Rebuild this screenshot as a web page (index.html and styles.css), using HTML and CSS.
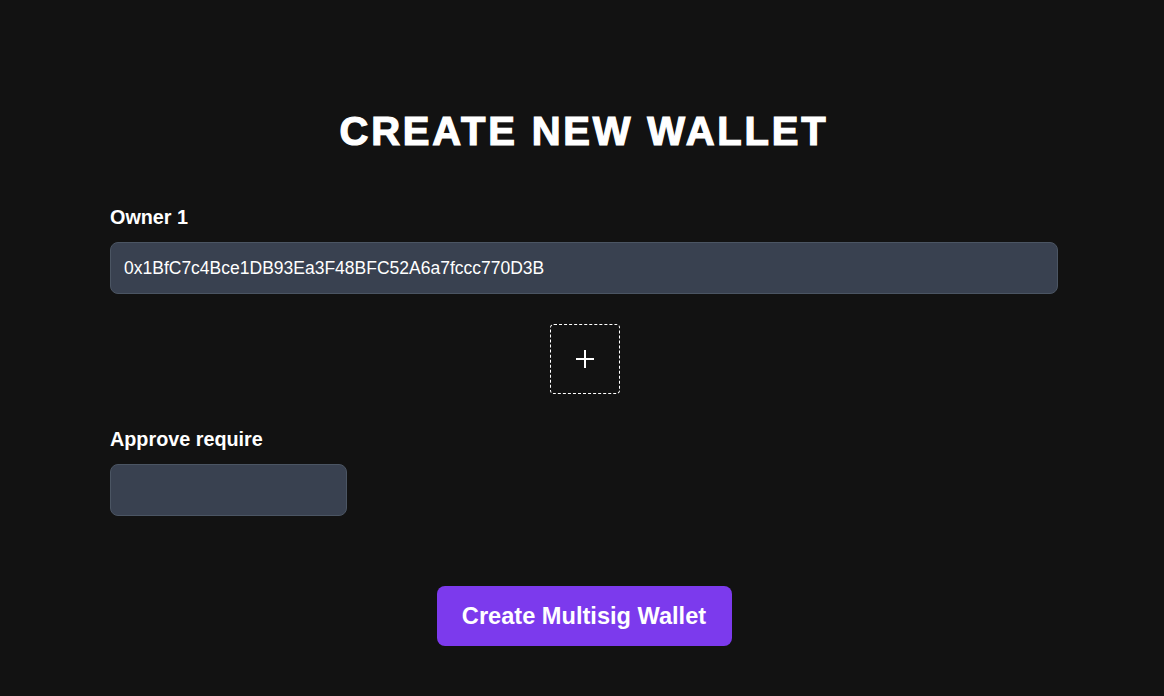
FILE: index.html
```html
<!DOCTYPE html>
<html>
<head>
<meta charset="utf-8">
<link rel="stylesheet" href="styles.css">
</head>
<body>
<main class="page">
  <h1 class="title">CREATE NEW WALLET</h1>
  <div class="field">
    <label class="label">Owner 1</label>
    <div class="input input-wide">0x1BfC7c4Bce1DB93Ea3F48BFC52A6a7fccc770D3B</div>
  </div>
  <div class="add-row">
    <button class="add-btn" aria-label="Add owner">
      <svg width="18" height="18" viewBox="0 0 18 18"><path d="M9 0v18M0 9h18" stroke="#fff" stroke-width="2" fill="none"/></svg>
    </button>
  </div>
  <div class="field field-approve">
    <label class="label">Approve require</label>
    <div class="input input-small"></div>
  </div>
  <div class="submit-row">
    <button class="submit">Create Multisig Wallet</button>
  </div>
</main>
</body>
</html>
```
FILE: styles.css
```css
html, body {
  margin: 0;
  padding: 0;
  background: #121212;
  color: #fff;
  font-family: "Liberation Sans", Arial, sans-serif;
}
.page {
  width: 948px;
  margin-left: 110px;
  padding-top: 108px;
  display: flex;
  flex-direction: column;
}
.title {
  margin: 0;
  text-align: center;
  font-size: 40px;
  font-weight: 700;
  letter-spacing: 2.8px;
  line-height: 46px;
  -webkit-text-stroke: 1.2px #fff;
}
.field {
  display: flex;
  flex-direction: column;
  margin-top: 51px;
}
.label {
  font-size: 19.8px;
  font-weight: 700;
  line-height: 24px;
}
.input {
  box-sizing: border-box;
  margin-top: 13px;
  height: 52px;
  background: #394150;
  border: 1px solid #4b5563;
  border-radius: 8px;
  font-size: 17.5px;
  line-height: 50px;
  padding: 0 13px;
  color: #fff;
}
.input-wide { width: 948px; }
.input-small { width: 237px; }
.add-row {
  display: flex;
  justify-content: center;
  margin-top: 30px;
  padding-left: 2px;
}
.add-btn {
  box-sizing: border-box;
  width: 70px;
  height: 70px;
  background: transparent;
  border: 1px dashed #fff;
  border-radius: 4px;
  display: flex;
  align-items: center;
  justify-content: center;
  padding: 0;
}
.field-approve { margin-top: 33px; }
.submit-row {
  display: flex;
  justify-content: center;
  margin-top: 70px;
}
.submit {
  width: 295px;
  height: 60px;
  background: #7c3aed;
  border: none;
  border-radius: 8px;
  color: #fff;
  font-family: "Liberation Sans", Arial, sans-serif;
  font-size: 23.6px;
  font-weight: 700;
}
```
